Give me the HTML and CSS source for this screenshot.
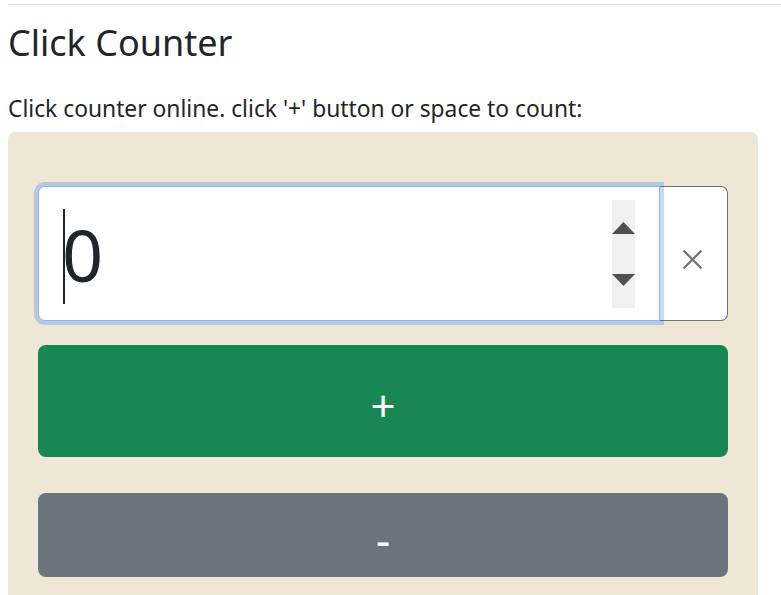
FILE: index.html
```html
<!DOCTYPE html>
<html lang="en">
<head>
<meta charset="utf-8">
<title>Click Counter</title>
<link rel="stylesheet" href="styles.css">
</head>
<body>
<div class="page">
  <hr class="rule">
  <h1 class="title">Click Counter</h1>
  <p class="lead">Click counter online. click '+' button or space to count:</p>
  <div class="counter">
    <div class="input-group">
      <div class="field">
        <span class="caret"></span><span class="value">0</span>
        <span class="spinner">
          <svg class="arrow" width="23" height="13" viewBox="0 0 23 13"><path d="M0 12 L11.5 0 L23 12 Z" fill="#505050"/></svg>
          <svg class="arrow" width="23" height="13" viewBox="0 0 23 13"><path d="M0 0 L23 0 L11.5 12 Z" fill="#505050"/></svg>
        </span>
      </div>
      <button class="clear" type="button" aria-label="Reset">
        <svg width="21" height="21" viewBox="0 0 21 21"><path d="M1.5 1.5 L19.5 19.5 M19.5 1.5 L1.5 19.5" stroke="#6c757d" stroke-width="2.2" fill="none"/></svg>
      </button>
    </div>
    <button class="btn btn-plus" type="button">+</button>
    <button class="btn btn-minus" type="button">-</button>
  </div>
</div>
</body>
</html>
```
FILE: styles.css
```css
html, body {
  margin: 0;
  padding: 0;
  background: #fff;
  overflow: hidden;
}
body {
  font-family: "Noto Sans", "Open Sans", sans-serif;
  color: #212529;
}
.page {
  display: flex;
  flex-direction: column;
  padding-left: 8px;
}
.rule {
  margin: 4px 0 0 0;
  border: 0;
  border-top: 1px solid #e2e2e2;
  height: 0;
}
.title {
  font-size: 36px;
  font-weight: 400;
  line-height: 1.2;
  margin: 16px 0 0 0;
}
.lead {
  font-size: 22.8px;
  line-height: 1.5;
  margin: 28px 0 0 0;
}
.counter {
  width: 690px;
  background: #efe7d6;
  border-radius: 7px 7px 0 0;
  padding: 54px 30px 40px 30px;
  margin-top: 6px;
  display: flex;
  flex-direction: column;
}
.input-group {
  display: flex;
  height: 135px;
}
.field {
  flex: 1;
  display: flex;
  align-items: center;
  background: #fff;
  border: 1px solid #86b7fe;
  border-radius: 7px 0 0 7px;
  box-shadow: 0 0 0 4px rgba(13, 110, 253, 0.25);
  padding-left: 24px;
  padding-right: 24px;
  position: relative;
  z-index: 1;
}
.caret {
  width: 2px;
  height: 95px;
  background: #212529;
  margin-top: 6px;
}
.value {
  font-size: 72px;
  line-height: 1;
  flex: 1;
  margin-left: -3px;
}
.spinner {
  width: 23px;
  height: 108px;
  background: #f0f0f0;
  display: flex;
  flex-direction: column;
  justify-content: space-between;
  padding: 22px 0 21px 0;
  box-sizing: border-box;
}
.arrow {
  display: block;
}
.clear {
  width: 68px;
  background: #fff;
  border: 1px solid #6c757d;
  border-left: 0;
  border-radius: 0 7px 7px 0;
  display: flex;
  align-items: center;
  justify-content: center;
  padding: 12px 2px 0 0;
}
.btn {
  border: 0;
  border-radius: 8px;
  color: #fff;
  font-family: "Noto Sans", "Open Sans", sans-serif;
  font-size: 44px;
  line-height: 1;
  padding: 8px 0 0 0;
}
.btn-plus {
  height: 112px;
  margin-top: 24px;
  background: #198754;
}
.btn-minus {
  height: 84px;
  margin-top: 36px;
  background: #6c757d;
}
```
